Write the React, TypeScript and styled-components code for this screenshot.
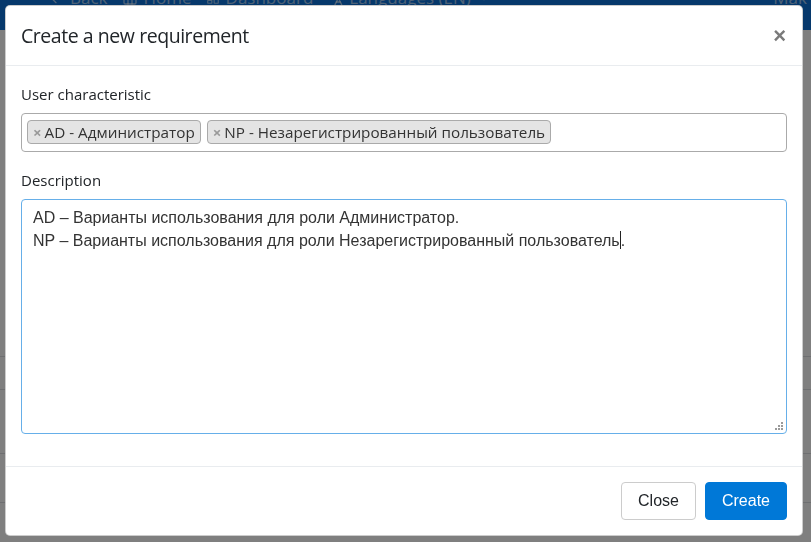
import React from 'react';
import styled, { createGlobalStyle } from 'styled-components';
import { ArrowLeft, Home, LayoutDashboard, Languages, ChevronDown } from 'lucide-react';

const GlobalStyle = createGlobalStyle`
  html, body {
    margin: 0;
    padding: 0;
  }
  body {
    width: 811px;
    height: 542px;
    overflow: hidden;
    background: #fff;
    font-family: "Open Sans", "Noto Sans", sans-serif;
    color: #212529;
  }
  * {
    box-sizing: border-box;
  }
`;

const Page = styled.div`
  width: 811px;
  height: 542px;
  overflow: hidden;
`;

const Navbar = styled.nav`
  height: 30px;
  background: #0c70d6;
  display: flex;
  align-items: flex-start;
  overflow: hidden;
  color: rgba(255, 255, 255, 0.6);
  font-size: 17px;
`;

const NavList = styled.div`
  display: flex;
  align-items: center;
  gap: 14px;
  margin-top: -14px;
  padding-left: 48px;
  flex: 1;
`;

const NavItem = styled.span`
  display: flex;
  align-items: center;
  gap: 6px;
`;

const NavRight = styled.span`
  margin-top: -14px;
  padding-right: 4px;
`;

const Rows = styled.div`
  padding-top: 326px;
`;

const Row = styled.div<{ $h: number }>`
  height: ${p => p.$h}px;
  border-top: 1px solid #dcdfe3;
`;

const Backdrop = styled.div`
  position: fixed;
  inset: 0;
  background: rgba(0, 0, 0, 0.5);
  padding: 5px 0 0 5px;
`;

const Dialog = styled.div`
  width: 798px;
  background: #fff;
  border: 1px solid rgba(0, 0, 0, 0.2);
  border-radius: 5px;
  display: flex;
  flex-direction: column;
`;

const Header = styled.div`
  display: flex;
  align-items: center;
  justify-content: space-between;
  padding: 15px 15px 15px 15px;
  border-bottom: 1px solid #e9ecef;
`;

const Title = styled.h5`
  margin: 0;
  font-family: "Open Sans", "Noto Sans", sans-serif;
  font-weight: 400;
  font-size: 19.5px;
  letter-spacing: -0.45px;
  line-height: 29px;
  color: #212529;
`;

const CloseX = styled.button`
  border: 0;
  background: transparent;
  padding: 0 1px 0 0;
  font-family: "Liberation Sans", Arial, sans-serif;
  font-weight: 700;
  font-size: 22px;
  line-height: 1;
  color: #7a7a7a;
  cursor: pointer;
`;

const Body = styled.div`
  padding: 16px 15px 16px;
`;

const Group = styled.div`
  margin-bottom: 16px;
`;

const Label = styled.label`
  display: block;
  font-size: 15px;
  line-height: 24px;
  margin-bottom: 7px;
  color: #212529;
`;

const TagBox = styled.div`
  display: flex;
  flex-wrap: wrap;
  gap: 6px;
  height: 39px;
  padding: 6px 5px;
  border: 1px solid #aaa;
  border-radius: 4px;
  background: #fff;
`;

const Tag = styled.span`
  display: inline-flex;
  align-items: center;
  height: 24px;
  padding: 0 5px;
  border: 1px solid #aaa;
  border-radius: 4px;
  background: #e4e4e4;
  font-size: 15.25px;
  color: #333;
`;

const TagRemove = styled.span`
  color: #999;
  font-weight: 700;
  font-size: 15px;
  margin-right: 3px;
`;

const TextArea = styled.div`
  position: relative;
  height: 235px;
  margin-top: 1px;
  padding: 6px 11px;
  border: 1px solid #66afe9;
  border-radius: 4px;
  font-family: "Liberation Sans", Arial, sans-serif;
  font-size: 16px;
  line-height: 23px;
  color: #333;
`;

const Caret = styled.span`
  display: inline-block;
  width: 1px;
  height: 18px;
  background: #222;
  vertical-align: -3px;
`;

const Grip = styled.svg`
  position: absolute;
  right: 2px;
  bottom: 2px;
`;

const Footer = styled.div`
  display: flex;
  justify-content: flex-end;
  gap: 9px;
  padding: 15px;
  border-top: 1px solid #e9ecef;
`;

const Button = styled.button<{ $primary?: boolean }>`
  height: 38px;
  padding: 0 16px;
  font-family: "Liberation Sans", Arial, sans-serif;
  font-size: 16px;
  border-radius: 4px;
  border: 1px solid ${p => (p.$primary ? '#0078d7' : '#ccc')};
  background: ${p => (p.$primary ? '#0078d7' : '#fff')};
  color: ${p => (p.$primary ? '#fff' : '#212529')};
  cursor: pointer;
`;

const tags = ['AD - Администратор', 'NP - Незарегистрированный пользователь'];

export default function App() {
  return (
    <>
      <GlobalStyle />
      <Page>
        <Navbar>
          <NavList>
            <NavItem>
              <ArrowLeft size={16} /> Back
            </NavItem>
            <NavItem>
              <Home size={16} /> Home
            </NavItem>
            <NavItem>
              <LayoutDashboard size={14} /> Dashboard
            </NavItem>
            <NavItem>
              <Languages size={16} /> Languages (EN) <ChevronDown size={14} />
            </NavItem>
          </NavList>
          <NavRight>Mak</NavRight>
        </Navbar>
        <Rows>
          <Row $h={33} />
          <Row $h={64} />
          <Row $h={49} />
          <Row $h={40} />
        </Rows>
      </Page>
      <Backdrop>
        <Dialog>
          <Header>
            <Title>Create a new requirement</Title>
            <CloseX aria-label="Close">×</CloseX>
          </Header>
          <Body>
            <Group>
              <Label>User characteristic</Label>
              <TagBox>
                {tags.map(t => (
                  <Tag key={t}>
                    <TagRemove>×</TagRemove>
                    {t}
                  </Tag>
                ))}
              </TagBox>
            </Group>
            <Group>
              <Label>Description</Label>
              <TextArea>
                AD – Варианты использования для роли Администратор.
                <br />
                NP – Варианты использования для роли Незарегистрированный пользователь
                <Caret />.
                <Grip width="10" height="10" viewBox="0 0 10 10">
                  <g fill="#9a9a9a">
                    <rect x="7" y="1" width="2" height="2" />
                    <rect x="4" y="4" width="2" height="2" />
                    <rect x="7" y="4" width="2" height="2" />
                    <rect x="1" y="7" width="2" height="2" />
                    <rect x="4" y="7" width="2" height="2" />
                    <rect x="7" y="7" width="2" height="2" />
                  </g>
                </Grip>
              </TextArea>
            </Group>
          </Body>
          <Footer>
            <Button>Close</Button>
            <Button $primary>Create</Button>
          </Footer>
        </Dialog>
      </Backdrop>
    </>
  );
}
